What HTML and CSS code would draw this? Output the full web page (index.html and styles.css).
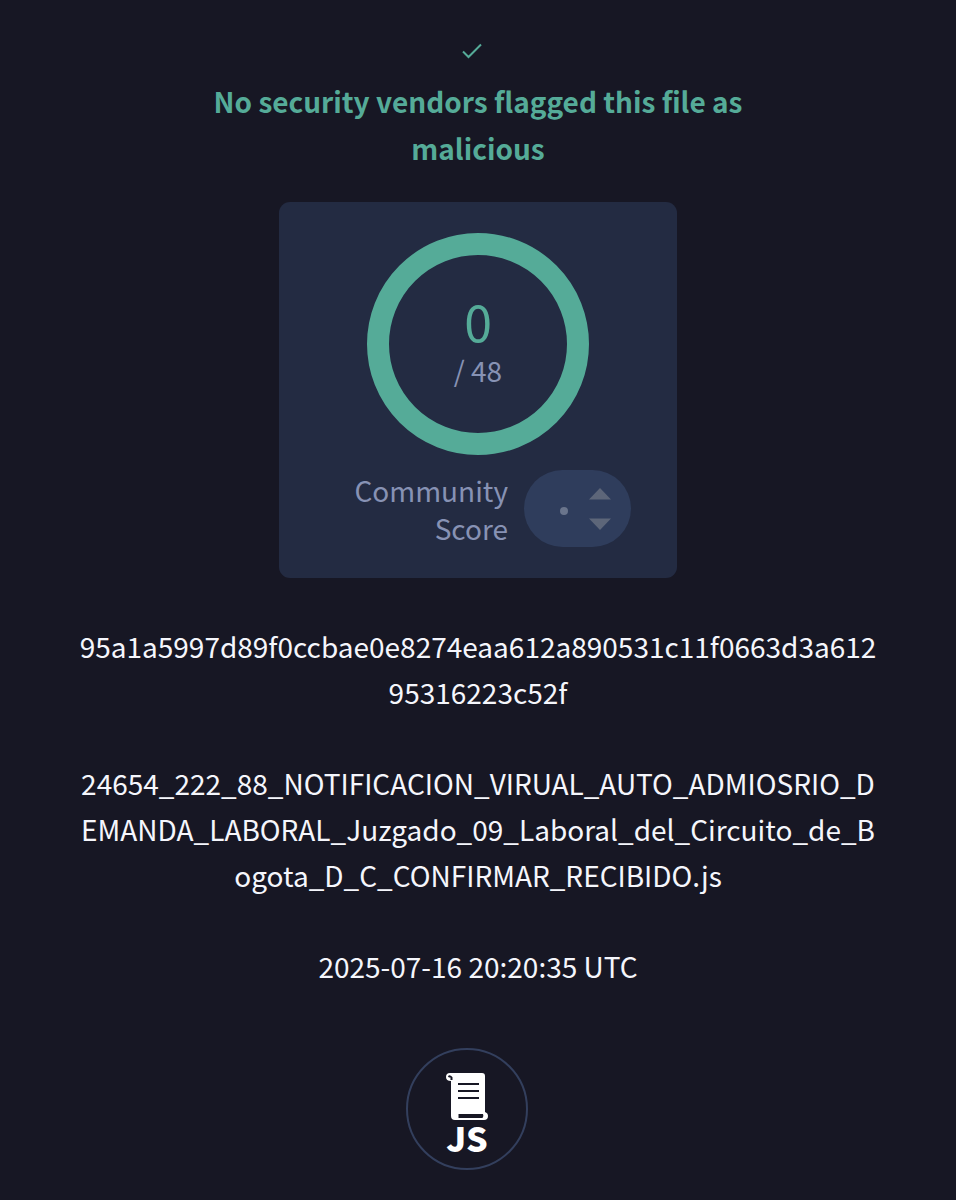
FILE: index.html
```html
<!DOCTYPE html>
<html lang="en">
<head>
<meta charset="utf-8">
<meta name="viewport" content="width=device-width, initial-scale=1">
<title>File report</title>
<link rel="stylesheet" href="styles.css">
</head>
<body>
<main class="report">
  <header class="verdict">
    <svg class="verdict-icon" viewBox="0 0 20 16" aria-hidden="true"><path d="M1 8.500 L6.500 14 L19 1.500"/></svg>
    <h1 class="verdict-text">No security vendors flagged this file as malicious</h1>
  </header>

  <section class="card">
    <div class="gauge">
      <span class="detections">0</span>
      <span class="total">/ 48</span>
    </div>
    <div class="community">
      <span class="community-label">Community<br>Score</span>
      <div class="votes">
        <span class="dot"></span>
        <svg class="arrows" viewBox="0 0 22 44" aria-hidden="true"><path d="M11 1 L22 12.500 H0 Z M0 31.500 H22 L11 43 Z"/></svg>
      </div>
    </div>
  </section>

  <section class="details">
    <p class="detail">95a1a5997d89f0ccbae0e8274eaa612a890531c11f0663d3a61295316223c52f</p>
    <p class="detail">24654_222_88_NOTIFICACION_VIRUAL_AUTO_ADMIOSRIO_DEMANDA_LABORAL_Juzgado_09_Laboral_del_Circuito_de_Bogota_D_C_CONFIRMAR_RECIBIDO.js</p>
    <p class="detail">2025-07-16 20:20:35 UTC</p>
  </section>

  <div class="filetype">
    <svg class="scroll" viewBox="0 0 42 48" aria-hidden="true">
      <path class="paper" d="M4 0 H36 Q39 0 39 3 V39 Q42 40 42 43 Q42 47 38 47 H9 Q5 47 5 43 V8 Q0 8 0 4 Q0 0 4 0 Z"/>
      <path class="curl" d="M5.500 7 V4.500 Q4 2.500 2.500 4"/>
      <path class="lines" d="M12 11 H33 M12 18 H33 M12 25 H33"/>
      <path class="foot" d="M12.500 41 H37 Q38 43 36.500 45 H12.500 Z"/>
    </svg>
    <span class="filetype-name">JS</span>
  </div>
</main>
</body>
</html>
```
FILE: styles.css
```css
* {
  box-sizing: border-box;
}

body {
  margin: 0;
  min-height: 100vh;
  background: #171724;
  color: #f5f6fc;
  font-family: "Noto Sans CJK SC", "Noto Sans", sans-serif;
  font-size: 28px;
  line-height: 46px;
}

.report {
  display: flex;
  flex-direction: column;
  align-items: center;
  padding: 43px 76px 28px;
}

.verdict {
  display: flex;
  flex-direction: column;
  align-items: center;
  gap: 19px;
  color: #55ab98;
}

.verdict-icon {
  width: 20px;
  height: 16px;
  margin-right: 12px;
  fill: none;
  stroke: currentColor;
  stroke-width: 2;
}

.verdict-text {
  max-width: 600px;
  margin: 0;
  font-size: 28px;
  font-weight: 700;
  line-height: 47px;
  text-align: center;
}

.card {
  display: flex;
  flex-direction: column;
  gap: 15px;
  width: 398px;
  max-width: 100%;
  margin-top: 30px;
  padding: 31px 46px;
  border-radius: 11px;
  background: #232b42;
}

.gauge {
  display: flex;
  flex-direction: column;
  align-items: center;
  justify-content: center;
  align-self: center;
  width: 222px;
  height: 222px;
  padding-bottom: 6px;
  border: 22px solid #55ab98;
  border-radius: 50%;
}

.detections {
  color: #55ab98;
  font-size: 50px;
  line-height: 58px;
}

.total {
  color: #8792b4;
  line-height: 42px;
}

.community {
  display: flex;
  align-items: center;
  justify-content: flex-end;
  gap: 16px;
}

.community-label {
  color: #8792b4;
  line-height: 38px;
  text-align: right;
}

.votes {
  display: flex;
  align-items: center;
  justify-content: flex-end;
  gap: 21px;
  width: 107px;
  height: 77px;
  padding: 0 20px;
  border-radius: 39px;
  background: #2f3d5c;
}

.dot {
  width: 8px;
  height: 8px;
  margin-top: 5px;
  border-radius: 50%;
  background: #6a758c;
}

.arrows {
  width: 22px;
  height: 44px;
  fill: #5d6679;
}

.details {
  display: flex;
  flex-direction: column;
  gap: 45px;
  width: 100%;
  margin-top: 45px;
}

.detail {
  margin: 0;
  line-height: 46px;
  text-align: center;
  word-break: break-all;
}

.filetype {
  display: flex;
  flex-direction: column;
  align-items: center;
  width: 122px;
  height: 122px;
  margin: 59px 22px 0 0;
  padding-top: 23px;
  border: 2px solid #333f5d;
  border-radius: 50%;
}

.scroll {
  width: 42px;
  height: 48px;
}

.paper {
  fill: #ffffff;
}

.curl,
.lines {
  fill: none;
  stroke: #171724;
  stroke-width: 2;
}

.foot {
  fill: #171724;
}

.filetype-name {
  color: #ffffff;
  font-size: 34px;
  font-weight: 900;
  line-height: 34px;
}
```
